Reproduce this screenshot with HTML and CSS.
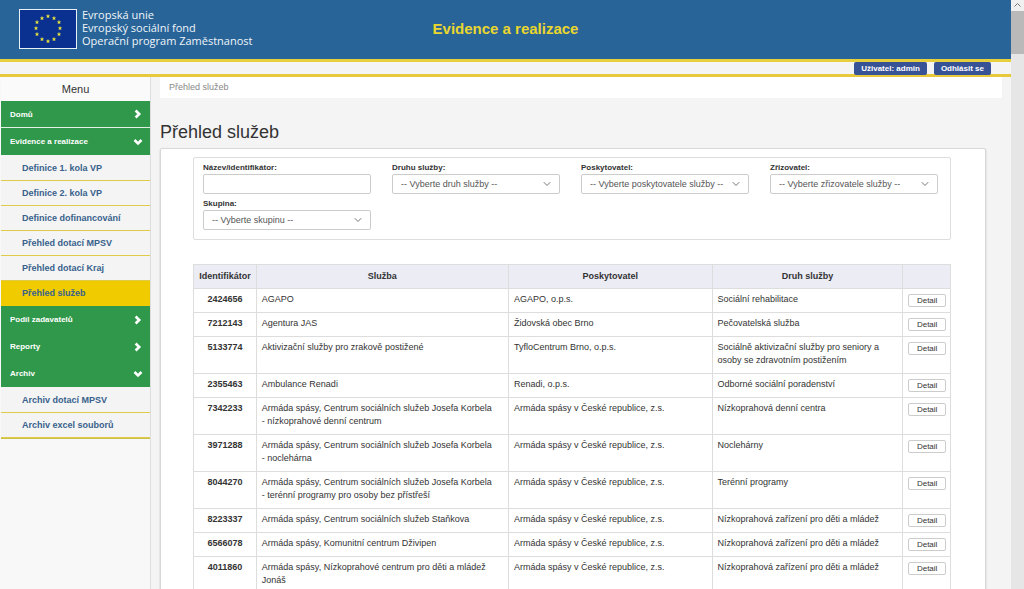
FILE: index.html
```
<!DOCTYPE html>
<html lang="cs">
<head>
<meta charset="utf-8">
<title>Evidence a realizace</title>
<link rel="stylesheet" href="styles.css">
</head>
<body>
<svg class="defs" aria-hidden="true">
  <symbol id="right" viewBox="0 0 10 10"><path d="M2.6 1.5 6.2 5 2.6 8.5" fill="none" stroke="currentColor" stroke-width="2.6"/></symbol>
  <symbol id="down" viewBox="0 0 10 10"><path d="M1.5 3 5 6.4 8.5 3" fill="none" stroke="currentColor" stroke-width="2.6"/></symbol>
  <symbol id="thin" viewBox="0 0 8 8"><path d="M.8 2.2 4 5.5 7.2 2.2" fill="none" stroke="currentColor" stroke-width="1"/></symbol>
  <symbol id="star" viewBox="-4 -4.5 8 8"><path d="M0-5 1.2-1.6H4.8L1.9.6 2.9 4 0 1.9-2.9 4-1.9.6-4.8-1.6H-1.2Z" fill="#e9e23c"/></symbol>
</svg>
<div class="page">
  <header class="header">
    <div class="brand">
      <svg class="flag" viewBox="0 0 58 40" role="img" aria-label="Vlajka EU">
        <rect x=".5" y=".5" width="57" height="39" fill="#0b3190" stroke="#e8f0f8"/>
        <use href="#star" x="27" y="5" width="4" height="4"/>
        <use href="#star" x="33" y="7" width="4" height="4"/>
        <use href="#star" x="38" y="11" width="4" height="4"/>
        <use href="#star" x="39" y="17" width="4" height="4"/>
        <use href="#star" x="38" y="23" width="4" height="4"/>
        <use href="#star" x="33" y="28" width="4" height="4"/>
        <use href="#star" x="27" y="30" width="4" height="4"/>
        <use href="#star" x="21" y="28" width="4" height="4"/>
        <use href="#star" x="16" y="23" width="4" height="4"/>
        <use href="#star" x="15" y="17" width="4" height="4"/>
        <use href="#star" x="16" y="11" width="4" height="4"/>
        <use href="#star" x="21" y="7" width="4" height="4"/>
      </svg>
      <p class="brand-text">Evropská unie<br>Evropský sociální fond<br>Operační program Zaměstnanost</p>
    </div>
    <div class="app-title">Evidence a realizace</div>
  </header>
  <div class="userbar">
    <button class="user-button" type="button">Uživatel: admin</button>
    <button class="user-button" type="button">Odhlásit se</button>
  </div>
  <div class="body">
    <nav class="sidebar">
      <div class="menu">
        <div class="menu-title">Menu</div>
        <a class="group split" href="#">Domů<svg class="chev"><use href="#right"/></svg></a>
        <a class="group" href="#">Evidence a realizace<svg class="chev"><use href="#down"/></svg></a>
        <div class="submenu">
          <a class="item" href="#">Definice 1. kola VP</a>
          <a class="item" href="#">Definice 2. kola VP</a>
          <a class="item" href="#">Definice dofinancování</a>
          <a class="item" href="#">Přehled dotací MPSV</a>
          <a class="item" href="#">Přehled dotací Kraj</a>
          <a class="item active" href="#">Přehled služeb</a>
        </div>
        <a class="group" href="#">Podíl zadavatelů<svg class="chev"><use href="#right"/></svg></a>
        <a class="group" href="#">Reporty<svg class="chev"><use href="#right"/></svg></a>
        <a class="group" href="#">Archiv<svg class="chev"><use href="#down"/></svg></a>
        <div class="submenu last">
          <a class="item" href="#">Archiv dotací MPSV</a>
          <a class="item" href="#">Archiv excel souborů</a>
        </div>
      </div>
    </nav>
    <main class="content">
      <div class="breadcrumb">Přehled služeb</div>
      <h1 class="heading">Přehled služeb</h1>
      <section class="panel">
        <form class="filters">
          <div class="field"><label for="name">Název/identifikátor:</label><div class="control"><input id="name" type="text"></div></div>
          <div class="field"><label for="kind">Druhu služby:</label><div class="control"><select id="kind"><option>-- Vyberte druh služby --</option></select><svg class="caret"><use href="#thin"/></svg></div></div>
          <div class="field"><label for="provider">Poskytovatel:</label><div class="control"><select id="provider"><option>-- Vyberte poskytovatele služby --</option></select><svg class="caret"><use href="#thin"/></svg></div></div>
          <div class="field"><label for="founder">Zřizovatel:</label><div class="control"><select id="founder"><option>-- Vyberte zřizovatele služby --</option></select><svg class="caret"><use href="#thin"/></svg></div></div>
          <div class="field"><label for="group">Skupina:</label><div class="control"><select id="group"><option>-- Vyberte skupinu --</option></select><svg class="caret"><use href="#thin"/></svg></div></div>
        </form>
        <table class="services">
          <colgroup><col class="c-id"><col class="c-name"><col class="c-provider"><col class="c-kind"><col></colgroup>
          <thead><tr><th>Identifikátor</th><th>Služba</th><th>Poskytovatel</th><th>Druh služby</th><th></th></tr></thead>
          <tbody>
            <tr><th>2424656</th><td>AGAPO</td><td>AGAPO, o.p.s.</td><td>Sociální rehabilitace</td><td class="act"><button type="button">Detail</button></td></tr>
            <tr><th>7212143</th><td>Agentura JAS</td><td>Židovská obec Brno</td><td>Pečovatelská služba</td><td class="act"><button type="button">Detail</button></td></tr>
            <tr><th>5133774</th><td>Aktivizační služby pro zrakově postižené</td><td>TyfloCentrum Brno, o.p.s.</td><td>Sociálně aktivizační služby pro seniory a<br>osoby se zdravotním postižením</td><td class="act"><button type="button">Detail</button></td></tr>
            <tr><th>2355463</th><td>Ambulance Renadi</td><td>Renadi, o.p.s.</td><td>Odborné sociální poradenství</td><td class="act"><button type="button">Detail</button></td></tr>
            <tr><th>7342233</th><td>Armáda spásy, Centrum sociálních služeb Josefa Korbela<br>- nízkoprahové denní centrum</td><td>Armáda spásy v České republice, z.s.</td><td>Nízkoprahová denní centra</td><td class="act"><button type="button">Detail</button></td></tr>
            <tr><th>3971288</th><td>Armáda spásy, Centrum sociálních služeb Josefa Korbela<br>- noclehárna</td><td>Armáda spásy v České republice, z.s.</td><td>Noclehárny</td><td class="act"><button type="button">Detail</button></td></tr>
            <tr><th>8044270</th><td>Armáda spásy, Centrum sociálních služeb Josefa Korbela<br>- terénní programy pro osoby bez přístřeší</td><td>Armáda spásy v České republice, z.s.</td><td>Terénní programy</td><td class="act"><button type="button">Detail</button></td></tr>
            <tr><th>8223337</th><td>Armáda spásy, Centrum sociálních služeb Staňkova</td><td>Armáda spásy v České republice, z.s.</td><td>Nízkoprahová zařízení pro děti a mládež</td><td class="act"><button type="button">Detail</button></td></tr>
            <tr><th>6566078</th><td>Armáda spásy, Komunitní centrum Dživipen</td><td>Armáda spásy v České republice, z.s.</td><td>Nízkoprahová zařízení pro děti a mládež</td><td class="act"><button type="button">Detail</button></td></tr>
            <tr><th>4011860</th><td>Armáda spásy, Nízkoprahové centrum pro děti a mládež<br>Jonáš</td><td>Armáda spásy v České republice, z.s.</td><td>Nízkoprahová zařízení pro děti a mládež</td><td class="act"><button type="button">Detail</button></td></tr>
          </tbody>
        </table>
      </section>
    </main>
  </div>
</div>
<div class="scrollbar" aria-hidden="true">
  <svg class="scroll-up" viewBox="0 0 13 11"><path d="M3.5 6.5 6.5 3.5 9.5 6.5" fill="none" stroke="#777"/></svg>
  <div class="thumb"></div>
</div>
</body>
</html>
```

FILE: styles.css
```
* { box-sizing: border-box; }

body {
  margin: 0;
  height: 100vh;
  display: flex;
  overflow: hidden;
  background: #f4f4f4;
  color: #333;
  font: 9px/13px "Liberation Sans", Arial, sans-serif;
}

button, input, select { font-family: inherit; color: inherit; }
a { text-decoration: none; }
.defs { display: none; }

.page {
  flex: 1;
  min-width: 0;
  display: flex;
  flex-direction: column;
}

/* Header */
.header {
  flex: none;
  display: grid;
  grid-template-columns: 1fr auto 1fr;
  align-items: center;
  height: 62px;
  padding: 0 19px 2px;
  background: #286497;
  border-bottom: 3px solid #e8cf3c;
}
.brand { display: flex; align-items: center; gap: 5px; }
.flag { flex: none; width: 58px; height: 40px; }
.brand-text {
  margin: 0;
  padding-bottom: 2px;
  color: #f0f5fa;
  font: 11px/13px "Open Sans", "Noto Sans", sans-serif;
  white-space: nowrap;
}
.app-title { color: #e9d62e; font-size: 15px; font-weight: bold; line-height: 18px; }

.userbar {
  flex: none;
  display: flex;
  justify-content: flex-end;
  align-items: center;
  gap: 7px;
  height: 15px;
  padding: 0 20px;
  border-bottom: 3px solid #e8c93c;
}
.user-button {
  height: 13px;
  padding: 0 7px;
  border: 0;
  border-radius: 2px;
  background: #385296;
  color: #fff;
  font-size: 8px;
  font-weight: bold;
  line-height: 13px;
}

.body { flex: 1; min-height: 0; display: flex; gap: 9px; }

/* Sidebar */
.sidebar {
  flex: none;
  width: 151px;
  background: #f8f8f8;
  border-right: 1px solid #ddd;
}
.menu { padding-left: 1px; }
.menu-title {
  height: 24px;
  background: #fafafa;
  font-size: 11px;
  line-height: 24px;
  text-align: center;
}
.group {
  display: flex;
  align-items: center;
  justify-content: space-between;
  height: 27px;
  padding: 0 7px 0 9px;
  background: #30984a;
  color: #fff;
  font-size: 8px;
  font-weight: bold;
}
.split { border-bottom: 1px solid #e4efe6; }
.chev { width: 10px; height: 10px; }
.submenu { padding-top: 1px; background: #f4f4f4; }
.item {
  display: block;
  height: 25px;
  padding-left: 21px;
  border-bottom: 1px solid #e0ca4a;
  color: #38618c;
  font-weight: bold;
  line-height: 24px;
}
.active { background: #f0cb00; border-color: #f0cb00; }
.last { border-bottom: 1px solid #c9c04a; }

/* Content */
.content { flex: 1; min-width: 0; padding-right: 9px; }
.breadcrumb {
  height: 21px;
  padding-left: 9px;
  background: #fff;
  color: #888;
  line-height: 21px;
}
.heading {
  margin: 23px 0 4px;
  font-size: 18px;
  font-weight: normal;
  line-height: 23px;
}
.panel {
  margin-right: 16px;
  padding: 8px 34px 40px 32px;
  border: 1px solid #d8d8d8;
  border-radius: 2px;
  background: #fff;
  box-shadow: 0 1px 2px rgba(0, 0, 0, .2);
}
.filters {
  display: grid;
  grid-template-columns: repeat(4, 1fr);
  row-gap: 4px;
  padding: 4px 0 9px;
  border: 1px solid #ddd;
  border-radius: 2px;
}
.field { padding: 0 12px 0 9px; }
.field label {
  display: block;
  font-size: 8px;
  font-weight: bold;
  line-height: 12px;
}
.control { display: grid; align-items: center; }
.control > * { grid-area: 1 / 1; }
.control input, .control select {
  width: 100%;
  height: 20px;
  padding: 0 8px;
  border: 1px solid #ccc;
  border-radius: 2px;
  background: #fff;
  color: #555;
  font-size: 9px;
  appearance: none;
}
.caret {
  justify-self: end;
  width: 8px;
  height: 8px;
  margin-right: 9px;
  color: #777;
  pointer-events: none;
}

/* Table */
.services {
  width: 100%;
  margin-top: 24px;
  table-layout: fixed;
  border-collapse: collapse;
}
.c-id { width: 8.3%; }
.c-name { width: 33.3%; }
.c-provider { width: 26.9%; }
.c-kind { width: 25.2%; }
.services th, .services td {
  height: 24px;
  padding: 4px 0 6px 5px;
  border: 1px solid #ddd;
  text-align: left;
  vertical-align: top;
  white-space: nowrap;
}
.services th { padding: 4px 0 6px; text-align: center; }
.services thead th { padding: 5px 0; background: #ececf5; }
.services .act { padding: 5px 4px 5px 5px; }
.act button {
  display: block;
  width: 100%;
  height: 13px;
  padding: 0;
  border: 1px solid #ccc;
  border-radius: 2px;
  background: #fff;
  font-size: 8px;
  line-height: 11px;
}

/* Scrollbar */
.scrollbar { flex: none; width: 13px; background: #e6e6e6; }
.scroll-up { display: block; width: 13px; height: 11px; background: #f0f0f0; }
.thumb { height: 43px; background: #b9b9b9; }
```
